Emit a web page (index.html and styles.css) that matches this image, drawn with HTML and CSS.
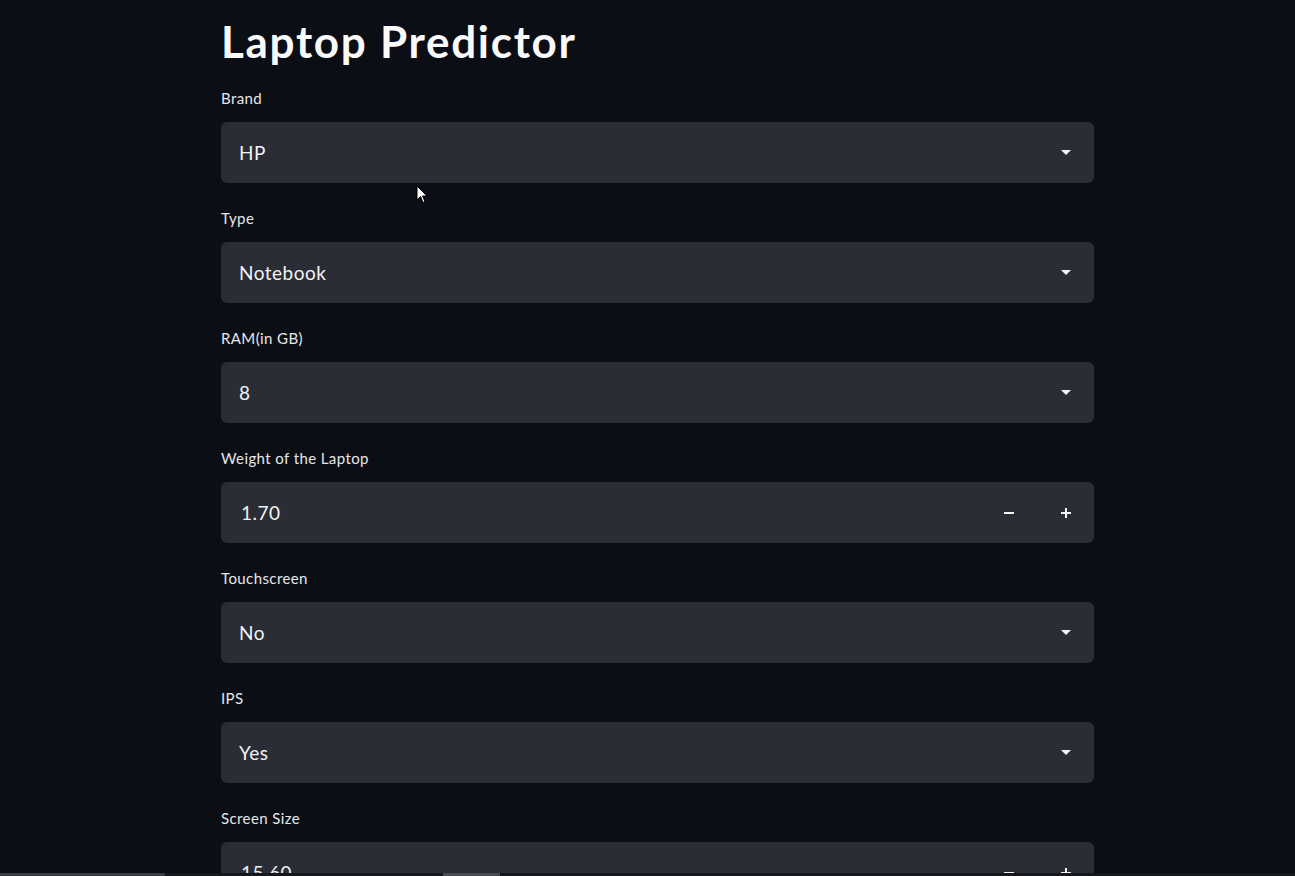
FILE: index.html
```html
<!DOCTYPE html>
<html>
<head>
<meta charset="utf-8">
<link rel="stylesheet" href="styles.css">
</head>
<body>
<main class="app">
  <h1 class="title">Laptop Predictor</h1>

  <div class="field">
    <label class="label">Brand</label>
    <div class="box"><span class="value">HP</span><span class="caret"></span></div>
  </div>

  <div class="field">
    <label class="label">Type</label>
    <div class="box"><span class="value">Notebook</span><span class="caret"></span></div>
  </div>

  <div class="field">
    <label class="label">RAM(in GB)</label>
    <div class="box"><span class="value">8</span><span class="caret"></span></div>
  </div>

  <div class="field">
    <label class="label">Weight of the Laptop</label>
    <div class="box number"><span class="value num">1.70</span><span class="step minus"></span><span class="step plus"></span></div>
  </div>

  <div class="field">
    <label class="label">Touchscreen</label>
    <div class="box"><span class="value">No</span><span class="caret"></span></div>
  </div>

  <div class="field">
    <label class="label">IPS</label>
    <div class="box"><span class="value">Yes</span><span class="caret"></span></div>
  </div>

  <div class="field">
    <label class="label">Screen Size</label>
    <div class="box number"><span class="value num">15.60</span><span class="step minus"></span><span class="step plus"></span></div>
  </div>
</main>
<svg class="cursor" width="12" height="19" viewBox="0 0 12 19"><path d="M1 1 L1 15 L4.5 11.5 L7 17.5 L9 16.6 L6.6 11 L11 11 Z" fill="#fff" stroke="#000" stroke-width="1"/></svg>
<div class="progress"><span class="seg a"></span><span class="seg b"></span></div>
</body>
</html>
```

FILE: styles.css
```css
html, body {
  margin: 0;
  padding: 0;
  height: 100%;
  overflow: hidden;
  background: #0b0e15;
  color: #fafafa;
  font-family: "Lato", "Noto Sans", sans-serif;
}

.app {
  width: 873px;
  margin-left: 221px;
  padding-top: 14px;
}

.title {
  margin: 0;
  font-size: 44px;
  line-height: 54px;
  font-weight: 700;
  letter-spacing: 1.7px;
  height: 74px;
}

.field {
  display: flex;
  flex-direction: column;
  margin-bottom: 25px;
}

.label {
  font-size: 15px;
  line-height: 20px;
  letter-spacing: 0.4px;
  color: #e6e7ea;
  margin-bottom: 14px;
}

.box {
  height: 61px;
  background: #2a2c36;
  border-radius: 6px;
  display: flex;
  align-items: center;
  padding: 0 23px 0 18px;
  box-sizing: border-box;
}

.value {
  flex: 1;
  font-size: 19px;
  letter-spacing: 0.5px;
  color: #f2f2f4;
}

.value.num {
  padding-left: 2px;
}

.caret {
  width: 0;
  height: 0;
  border-left: 5px solid transparent;
  border-right: 5px solid transparent;
  border-top: 5px solid #f4f4f6;
}

.step {
  position: relative;
  width: 10px;
  height: 10px;
}

.minus {
  margin-right: 47px;
}

.step::before {
  content: "";
  position: absolute;
  left: 0;
  top: 4px;
  width: 10px;
  height: 2px;
  background: #f4f4f6;
}

.plus::after {
  content: "";
  position: absolute;
  left: 4px;
  top: 0;
  width: 2px;
  height: 10px;
  background: #f4f4f6;
}

.cursor {
  position: absolute;
  left: 416px;
  top: 185px;
}

.progress {
  position: absolute;
  left: 0;
  right: 0;
  bottom: 0;
  height: 3px;
  background: #15171d;
}

.seg {
  position: absolute;
  top: 0;
  height: 3px;
  background: #3a3c44;
}

.seg.a { left: 0; width: 165px; }
.seg.b { left: 443px; width: 57px; background: #4a4c54; }
```
